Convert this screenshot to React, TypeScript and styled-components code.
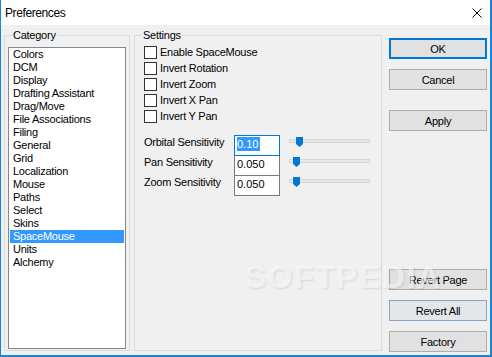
import React from "react";
import styled, { createGlobalStyle, css } from "styled-components";

const GlobalStyle = createGlobalStyle`
  html, body {
    margin: 0;
    padding: 0;
    background: #ffffff;
    overflow: hidden;
  }
  body {
    font-family: "Liberation Sans", Arial, sans-serif;
    font-size: 11px;
    color: #000;
  }
`;

const categories = [
  "Colors",
  "DCM",
  "Display",
  "Drafting Assistant",
  "Drag/Move",
  "File Associations",
  "Filing",
  "General",
  "Grid",
  "Localization",
  "Mouse",
  "Paths",
  "Select",
  "Skins",
  "SpaceMouse",
  "Units",
  "Alchemy",
];

const options = [
  "Enable SpaceMouse",
  "Invert Rotation",
  "Invert Zoom",
  "Invert X Pan",
  "Invert Y Pan",
];

const sensitivities = [
  { label: "Orbital Sensitivity", value: "0.10", thumb: 7, focused: true },
  { label: "Pan Sensitivity", value: "0.050", thumb: 4, focused: false },
  { label: "Zoom Sensitivity", value: "0.050", thumb: 4, focused: false },
];

const Window = styled.div`
  position: relative;
  width: 492px;
  height: 357px;
  box-sizing: border-box;
  border: solid #1883d7;
  border-width: 0 2px 2px 1px;
  background: #f0f0f0;
  display: flex;
  flex-direction: column;
  overflow: hidden;
`;

const TitleBar = styled.div`
  height: 25px;
  flex: none;
  background: #fff;
  display: flex;
  align-items: center;
  justify-content: space-between;
  padding: 1px 8px 0 4px;
  box-sizing: border-box;
`;

const Title = styled.span`
  font-size: 12px;
  line-height: 15px;
  letter-spacing: -0.4px;
`;

const Body = styled.div`
  flex: 1;
  min-height: 0;
  display: flex;
  gap: 4px;
  padding: 4px 3px;
`;

const GroupBox = styled.fieldset<{ $width: number }>`
  margin: 0;
  min-width: 0;
  width: ${(p) => p.$width}px;
  box-sizing: border-box;
  border: 1px solid #dcdcdc;
  padding: 5px 3px 1px;
  display: flex;
  flex-direction: column;
`;

const Legend = styled.legend`
  margin-left: 4px;
  padding: 0 1px;
  line-height: 13px;
  letter-spacing: -0.25px;
`;

const ListBox = styled.ul`
  flex: 1;
  margin: 0;
  padding: 0 1px;
  list-style: none;
  background: #fff;
  border: 1px solid #828790;
`;

const ListItem = styled.li<{ $selected?: boolean }>`
  height: 13px;
  line-height: 13px;
  padding-left: 3px;
  letter-spacing: -0.25px;
  white-space: nowrap;
  ${(p) =>
    p.$selected &&
    css`
      background: #3399ff;
      color: #fff;
    `}
`;

const SettingsBody = styled.div`
  margin: -1px 0 0 6px;
`;

const CheckList = styled.div`
  display: flex;
  flex-direction: column;
  gap: 3px;
`;

const CheckRow = styled.label`
  display: flex;
  align-items: center;
  gap: 3px;
  height: 13px;
  line-height: 13px;
  letter-spacing: -0.25px;
`;

const CheckBox = styled.span`
  width: 13px;
  height: 13px;
  box-sizing: border-box;
  border: 1px solid #333;
  background: #fff;
`;

const SensitivityGrid = styled.div`
  margin-top: 12px;
  display: grid;
  grid-template-columns: 90px 46px 90px;
  grid-auto-rows: 20px;
`;

const FieldLabel = styled.span`
  padding-top: 1px;
  line-height: 13px;
  letter-spacing: -0.25px;
  white-space: nowrap;
`;

const ValueBox = styled.div<{ $focused?: boolean }>`
  position: relative;
  z-index: ${(p) => (p.$focused ? 1 : 0)};
  height: 21px;
  box-sizing: border-box;
  border: 1px solid ${(p) => (p.$focused ? "#0078d7" : "#7a7a7a")};
  background: #fff;
  padding: 1px 2px 0;
  line-height: 13px;
`;

const Selection = styled.span`
  display: inline-block;
  padding: 1px 2px 0 0;
  background: #3399ff;
  color: #fff;
`;

const Plain = styled.span`
  display: inline-block;
  padding-top: 1px;
`;

const Slider = styled.div`
  position: relative;
  padding-left: 9px;
`;

const Track = styled.div`
  margin-top: 4px;
  width: 81px;
  height: 4px;
  box-sizing: border-box;
  background: #e7e7e7;
  border: 1px solid #d6d6d6;
`;

const Thumb = styled.svg`
  position: absolute;
  top: 2px;
`;

const ButtonColumn = styled.div`
  width: 98px;
  margin: 0 0 -1px 3px;
  padding-top: 9px;
  display: flex;
  flex-direction: column;
`;

const Button = styled.button<{ $variant?: "default" | "hover"; $gap?: number }>`
  height: 21px;
  flex: none;
  margin-top: ${(p) => p.$gap ?? 0}px;
  box-sizing: border-box;
  padding: 0;
  font-family: "Liberation Sans", Arial, sans-serif;
  font-size: 11px;
  letter-spacing: -0.25px;
  color: #000;
  background: #e1e1e1;
  border: 1px solid #adadad;
  ${(p) =>
    p.$variant === "default" &&
    css`
      border: 2px solid #0078d7;
    `}
  ${(p) =>
    p.$variant === "hover" &&
    css`
      background: #e3e6e9;
      border-color: #89a4bf;
    `}
`;

const Spacer = styled.div`
  flex: 1;
`;

const Watermark = styled.div`
  position: absolute;
  left: 244px;
  top: 261px;
  font-family: "Liberation Sans", Arial, sans-serif;
  font-weight: bold;
  font-size: 32px;
  line-height: 32px;
  letter-spacing: 1.5px;
  color: rgba(255, 255, 255, 0.6);
  text-shadow: 1px 1px 2px rgba(0, 0, 0, 0.1);
  pointer-events: none;
  sup {
    font-size: 9px;
    font-weight: normal;
    vertical-align: top;
    margin-left: -1px;
  }
`;

const CloseIcon = () => (
  <svg width="10" height="10" viewBox="0 0 10 10">
    <path d="M0.5 0.5 L9.5 9.5 M9.5 0.5 L0.5 9.5" stroke="#000" strokeWidth="1" fill="none" />
  </svg>
);

export default function App() {
  return (
    <>
      <GlobalStyle />
      <Window>
        <TitleBar>
          <Title>Preferences</Title>
          <CloseIcon />
        </TitleBar>
        <Body>
          <GroupBox $width={126}>
            <Legend>Category</Legend>
            <ListBox>
              {categories.map((c) => (
                <ListItem key={c} $selected={c === "SpaceMouse"}>
                  {c}
                </ListItem>
              ))}
            </ListBox>
          </GroupBox>
          <GroupBox $width={248}>
            <Legend>Settings</Legend>
            <SettingsBody>
              <CheckList>
                {options.map((o) => (
                  <CheckRow key={o}>
                    <CheckBox />
                    {o}
                  </CheckRow>
                ))}
              </CheckList>
              <SensitivityGrid>
                {sensitivities.map((s) => (
                  <React.Fragment key={s.label}>
                    <FieldLabel>{s.label}</FieldLabel>
                    <ValueBox $focused={s.focused}>
                      {s.focused ? <Selection>{s.value}</Selection> : <Plain>{s.value}</Plain>}
                    </ValueBox>
                    <Slider>
                      <Track />
                      <Thumb width="7" height="10" viewBox="0 0 7 10" style={{ left: 9 + s.thumb }}>
                        <path d="M0 0 H7 V7 L3.5 10 L0 7 Z" fill="#0078d7" />
                      </Thumb>
                    </Slider>
                  </React.Fragment>
                ))}
              </SensitivityGrid>
            </SettingsBody>
          </GroupBox>
          <ButtonColumn>
            <Button $variant="default">OK</Button>
            <Button $gap={10}>Cancel</Button>
            <Button $gap={20}>Apply</Button>
            <Spacer />
            <Button>Revert Page</Button>
            <Button $gap={10} $variant="hover">
              Revert All
            </Button>
            <Button $gap={10}>Factory</Button>
          </ButtonColumn>
        </Body>
        <Watermark>
          SOFTPEDIA<sup>®</sup>
        </Watermark>
      </Window>
    </>
  );
}
